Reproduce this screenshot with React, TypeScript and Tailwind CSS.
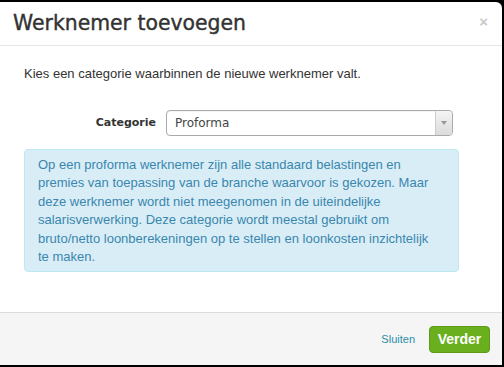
export default function App() {
  return (
    <div className="w-[504px] h-[367px] bg-black overflow-hidden pt-[2px]">
      <div className="w-[502px] h-[363px] bg-white rounded-tr-[6px] flex flex-col">
        {/* Header */}
        <div className="h-[44px] border-b border-[#e5e5e5] flex items-center justify-between pl-[13px] pr-[14px]">
          <h1 className="text-[20.4px] font-normal text-[#333] font-['DejaVu_Sans',sans-serif] [-webkit-text-stroke:0.4px_#333]">
            Werknemer toevoegen
          </h1>
          <span className="text-[#c8c8c8] text-[15px] font-bold font-['Liberation_Sans',sans-serif] mt-[-2px]">
            ×
          </span>
        </div>

        {/* Body */}
        <div className="flex-1 px-[24px] pt-[19px] font-['Liberation_Sans',Arial,sans-serif]">
          <p className="text-[13px] text-[#333] leading-[18px]">
            Kies een categorie waarbinnen de nieuwe werknemer valt.
          </p>

          <div className="mt-[27px] flex items-center">
            <label className="w-[142px] text-right pr-[10px] text-[11px] font-bold text-[#333] font-['DejaVu_Sans',sans-serif]">
              Categorie
            </label>
            <div className="w-[287px] h-[26px] border border-[#aaa] rounded-[4px] flex items-stretch bg-white shadow-[inset_0_1px_1px_rgba(0,0,0,0.05)]">
              <span className="flex-1 flex items-center pl-[8px] text-[12px] text-[#444] font-['DejaVu_Sans',sans-serif]">
                Proforma
              </span>
              <span className="w-[17px] border-l border-[#ccc] rounded-r-[4px] bg-gradient-to-b from-[#f4f4f4] to-[#dcdcdc] flex items-center justify-center">
                <svg width="6" height="4" viewBox="0 0 6 4">
                  <path d="M0 0h6L3 4z" fill="#999" />
                </svg>
              </span>
            </div>
          </div>

          <div className="mt-[13px] w-[435px] border border-[#bce8f1] bg-[#d9edf7] rounded-[4px] pl-[13px] pr-[20px] pt-[6px] pb-[5px] text-[13px] leading-[18.4px] text-[#3a87ad]">
            Op een proforma werknemer zijn alle standaard belastingen en premies van toepassing van de branche waarvoor is gekozen. Maar deze werknemer wordt niet meegenomen in de uiteindelijke salarisverwerking. Deze categorie wordt meestal gebruikt om bruto/netto loonberekeningen op te stellen en loonkosten inzichtelijk te maken.
          </div>
        </div>

        {/* Footer */}
        <div className="h-[53px] border-t border-[#ddd] bg-[#f5f5f5] flex items-center justify-end pr-[12px] gap-[14px] font-['Liberation_Sans',Arial,sans-serif]">
          <span className="text-[11px] text-[#2a8ea8]">Sluiten</span>
          <button className="w-[61px] h-[27px] rounded-[4px] bg-[#6aaf1e] border border-[#5c9a18] text-white text-[14px] font-bold">
            Verder
          </button>
        </div>
      </div>
    </div>
  );
}
